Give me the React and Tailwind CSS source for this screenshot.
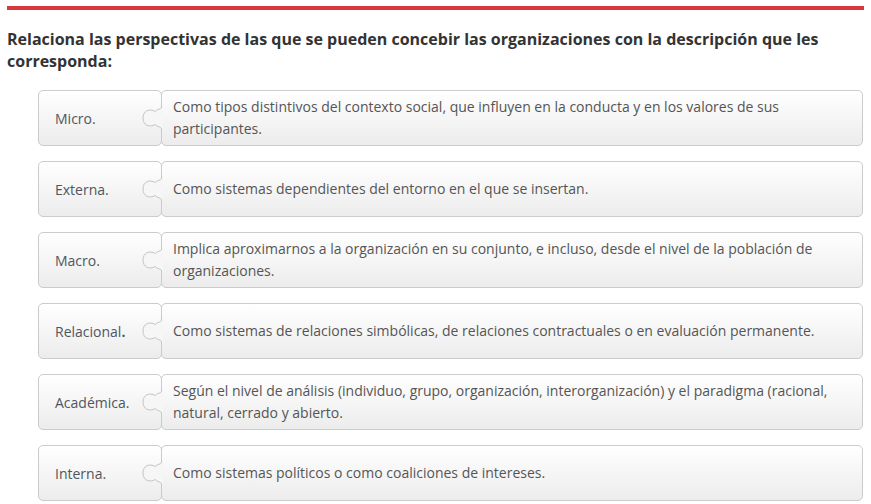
import React from 'react';

const rows = [
  {
    label: 'Micro.',
    text: 'Como tipos distintivos del contexto social, que influyen en la conducta y en los valores de sus participantes.',
  },
  { label: 'Externa.', text: 'Como sistemas dependientes del entorno en el que se insertan.' },
  {
    label: 'Macro.',
    text: 'Implica aproximarnos a la organización en su conjunto, e incluso, desde el nivel de la población de organizaciones.',
  },
  {
    label: (
      <>
        Relacional<span className="font-bold">.</span>
      </>
    ),
    text: 'Como sistemas de relaciones simbólicas, de relaciones contractuales o en evaluación permanente.',
  },
  {
    label: 'Académica.',
    text: 'Según el nivel de análisis (individuo, grupo, organización, interorganización) y el paradigma (racional, natural, cerrado y abierto.',
  },
  { label: 'Interna.', text: 'Como sistemas políticos o como coaliciones de intereses.' },
];

// puzzle tab drawn where the two halves meet
function Knob() {
  const d =
    'M20.5 0 L20.5 2 C20.5 4.5 15.5 4 14.5 6.5 C8 3 2 6 2 13 C2 20 8 23 14.5 19.5 C15.5 22 20.5 21.5 20.5 24 L20.5 26';
  return (
    <svg
      className="absolute left-[103px] top-1/2 -translate-y-1/2"
      width="22"
      height="26"
      viewBox="0 0 22 26"
    >
      <path d={d + ' L22 26 L22 0 Z'} fill="#f6f6f6" stroke="none" />
      <path d={d} fill="none" stroke="#c4c4c4" strokeWidth="1" />
    </svg>
  );
}

function Row({ label, text }) {
  return (
    <div className="relative flex h-[56px]">
      <div className="flex w-[124px] shrink-0 items-center rounded-[5px] border border-[#cbcbcb] bg-linear-to-b from-white to-[#ececec] pl-[16px] text-[14px] text-[#4f5660]">
        {label}
      </div>
      <div className="-ml-px flex flex-1 items-center rounded-[5px] border border-[#cbcbcb] bg-linear-to-b from-white to-[#ececec] pl-[11px] pr-4 text-[14px] leading-[22px] text-[#555]">
        {text}
      </div>
      <Knob />
    </div>
  );
}

export default function App() {
  return (
    <div
      className="min-h-[504px] w-[871px] bg-white px-[7px] pt-[6px]"
      style={{ fontFamily: '"Open Sans", "Noto Sans", sans-serif' }}
    >
      <div className="h-[4px] bg-[#d9383c]" />
      <h1 className="mt-[18px] pr-4 text-[16px] font-bold leading-[22px] text-[#333]">
        Relaciona las perspectivas de las que se pueden concebir las organizaciones con la descripción que les
        corresponda:
      </h1>
      <div className="mt-[18px] flex flex-col gap-[15px] pl-[31px] pr-[1px]">
        {rows.map((r, i) => (
          <Row key={i} label={r.label} text={r.text} />
        ))}
      </div>
    </div>
  );
}
